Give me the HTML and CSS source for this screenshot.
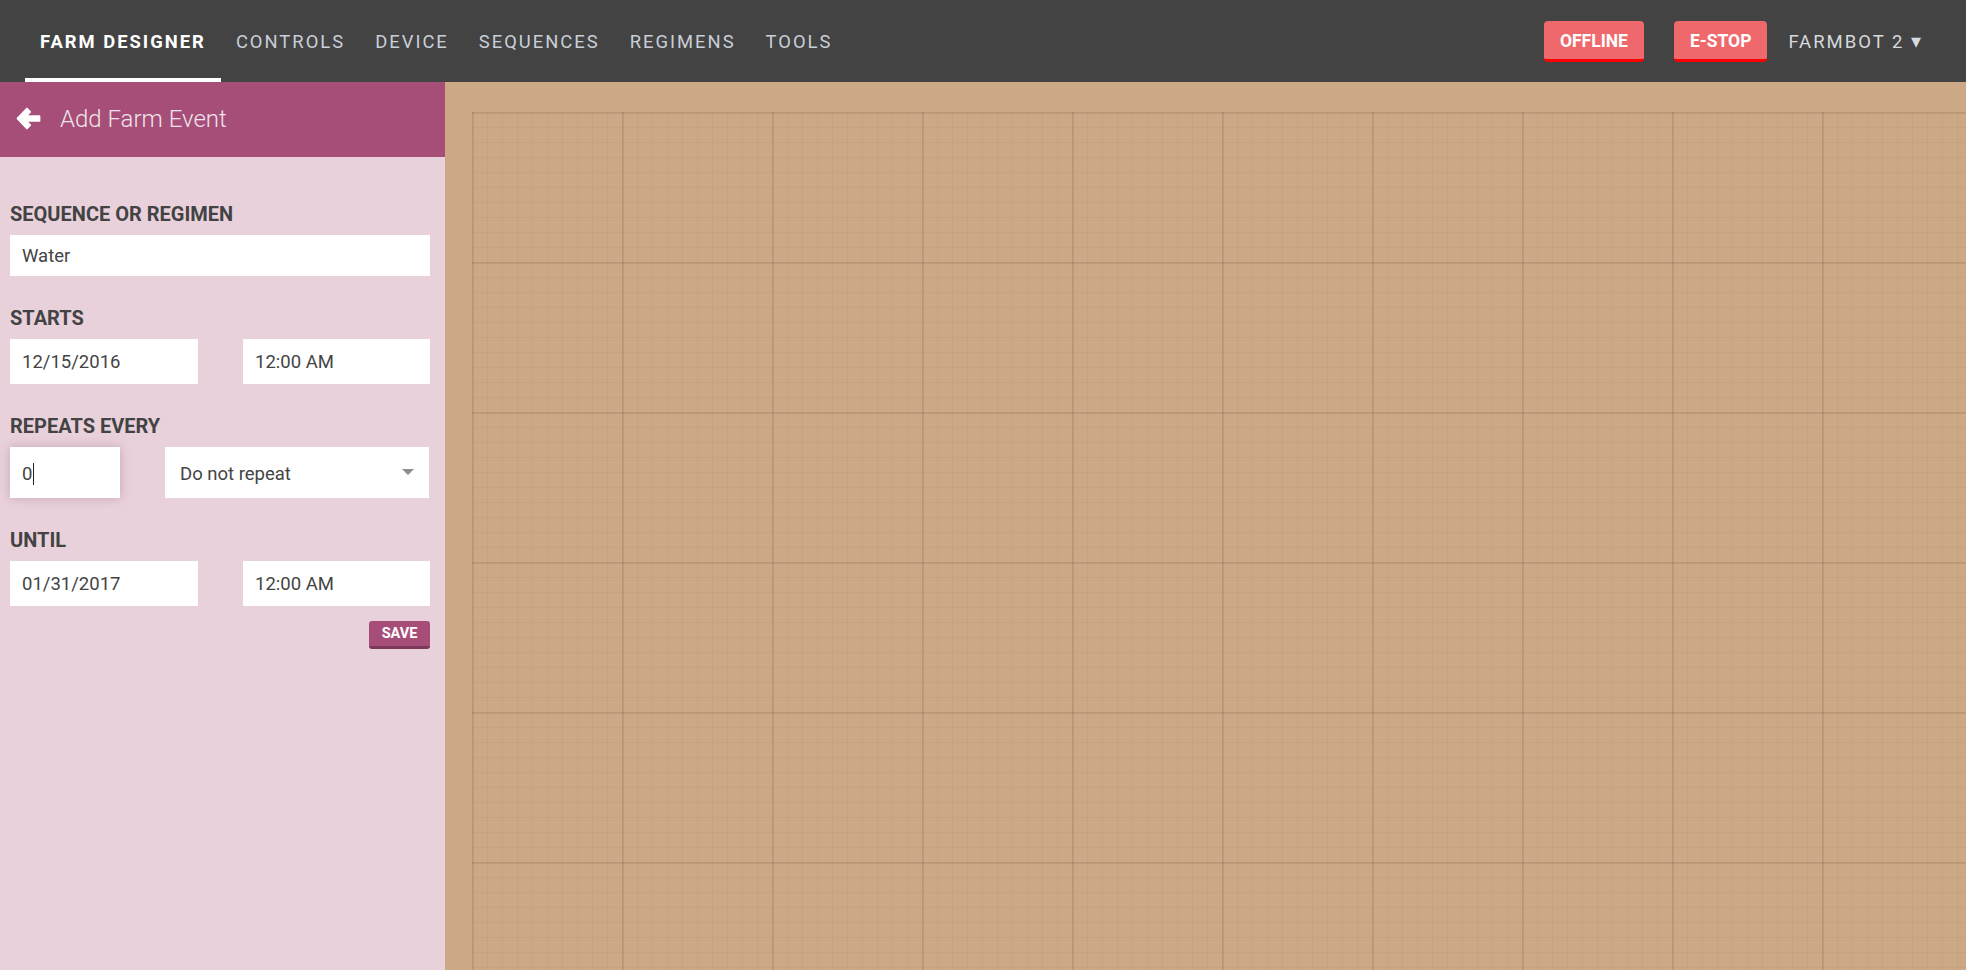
FILE: index.html
```html
<!DOCTYPE html>
<html lang="en">
<head>
<meta charset="utf-8">
<title>Farm Designer - Add Farm Event</title>
<link rel="stylesheet" href="styles.css">
</head>
<body>
<nav class="topbar">
  <div class="nav-links">
    <a class="nav-link active">FARM DESIGNER</a>
    <a class="nav-link">CONTROLS</a>
    <a class="nav-link">DEVICE</a>
    <a class="nav-link">SEQUENCES</a>
    <a class="nav-link">REGIMENS</a>
    <a class="nav-link">TOOLS</a>
  </div>
  <div class="nav-right">
    <button class="status-btn">OFFLINE</button>
    <button class="status-btn">E-STOP</button>
    <span class="bot-menu">FARMBOT 2 <span class="caret">▾</span></span>
  </div>
</nav>
<main class="layout">
  <aside class="panel">
    <header class="panel-header">
      <svg class="back-icon" viewBox="0 0 24 22" width="25" height="23" aria-hidden="true">
        <path d="M10.5 1.5 L1.5 11 L10.5 20.5 L13.6 17.4 L9.6 13.2 H22.5 V8.8 H9.6 L13.6 4.6 Z" fill="#ffffff" stroke="#ffffff" stroke-width="1.8" stroke-linejoin="round"/>
      </svg>
      <span class="panel-title">Add Farm Event</span>
    </header>
    <section class="form">
      <div class="field">
        <label class="field-label">SEQUENCE OR REGIMEN</label>
        <div class="box box-41">Water</div>
      </div>
      <div class="field">
        <label class="field-label">STARTS</label>
        <div class="pair">
          <div class="box box-45">12/15/2016</div>
          <div class="box box-45">12:00 AM</div>
        </div>
      </div>
      <div class="field">
        <label class="field-label">REPEATS EVERY</label>
        <div class="repeat-row">
          <div class="box box-51 focused">0<span class="text-caret"></span></div>
          <div class="box box-51 select">Do not repeat<span class="select-arrow"></span></div>
        </div>
      </div>
      <div class="field">
        <label class="field-label">UNTIL</label>
        <div class="pair">
          <div class="box box-45">01/31/2017</div>
          <div class="box box-45">12:00 AM</div>
        </div>
      </div>
      <div class="actions">
        <button class="save-btn">SAVE</button>
      </div>
    </section>
  </aside>
  <section class="canvas">
    <div class="grid"></div>
  </section>
</main>
</body>
</html>
```
FILE: styles.css
```css
* { box-sizing: border-box; }
html, body { margin: 0; height: 100%; }
body {
  font-family: Roboto, "Liberation Sans", sans-serif;
  background: #cca887;
  overflow: hidden;
  width: 1966px;
  height: 970px;
}

.topbar {
  height: 82px;
  background: #434343;
  display: flex;
  align-items: center;
  justify-content: space-between;
  padding: 0 45px 0 25px;
}
.nav-links { display: flex; height: 100%; }
.nav-link {
  display: flex;
  align-items: center;
  height: 82px;
  padding: 4px 15px 0 15px;
  border-bottom: 4px solid transparent;
  font-size: 18.4px;
  letter-spacing: 2px;
  color: #c9cfd8;
  cursor: pointer;
}
.nav-link.active {
  color: #ffffff;
  font-weight: 700;
  border-bottom-color: #ffffff;
}
.nav-right { display: flex; align-items: center; }
.status-btn {
  height: 41px;
  padding: 2px 16px 0;
  margin-right: 30px;
  border: none;
  border-bottom: 3px solid #ff0000;
  border-radius: 4px;
  background: #ef686b;
  color: #ffffff;
  font-family: Roboto, "Liberation Sans", sans-serif;
  font-weight: 700;
  font-size: 17.5px;
  line-height: 36px;
}
.status-btn + .status-btn { margin-right: 21px; }
.bot-menu {
  font-size: 18.5px;
  letter-spacing: 2px;
  color: #d6d9de;
}
.caret { font-size: 20px; letter-spacing: 0; }

.layout {
  display: flex;
  height: 888px;
}
.panel {
  width: 445px;
  flex: none;
  background: #e9d1dc;
}
.panel-header {
  height: 75px;
  background: #a64e78;
  display: flex;
  align-items: center;
  padding-left: 16px;
}
.back-icon { margin-right: 19px; margin-top: -2px; }
.panel-title {
  font-size: 24px;
  font-weight: 300;
  color: #efe4eb;
  margin-top: -2px;
}

.form { padding: 45px 15px 0 10px; }
.field + .field { margin-top: 30px; }
.field-label {
  display: block;
  font-size: 20px;
  font-weight: 700;
  line-height: 24px;
  color: #434343;
  margin-bottom: 9px;
}
.box {
  background: #ffffff;
  display: flex;
  align-items: center;
  padding-left: 12px;
  font-size: 18.5px;
  color: #444444;
  position: relative;
}
.box-41 { height: 41px; }
.box-45 { height: 45px; }
.box-51 { height: 51px; padding-top: 2px; }
.pair {
  display: grid;
  grid-template-columns: 188px 187px;
  column-gap: 45px;
}
.repeat-row {
  display: grid;
  grid-template-columns: 110px 264px;
  column-gap: 45px;
}
.focused {
  box-shadow: 0 0 10px rgba(90, 40, 60, 0.25);
}
.text-caret {
  display: inline-block;
  width: 1px;
  height: 22px;
  background: #222;
  margin-left: 1px;
}
.select { padding-left: 15px; }
.select-arrow {
  position: absolute;
  right: 15px;
  top: 22px;
  width: 0;
  height: 0;
  border-left: 6.5px solid transparent;
  border-right: 6.5px solid transparent;
  border-top: 6.5px solid #8c8c8c;
}
.actions {
  display: flex;
  justify-content: flex-end;
  margin-top: 15px;
}
.save-btn {
  width: 61px;
  height: 28px;
  border: none;
  border-bottom: 3px solid #7b3a5a;
  border-radius: 3px;
  background: #a64e78;
  color: #ffffff;
  font-family: Roboto, "Liberation Sans", sans-serif;
  font-weight: 700;
  font-size: 14.5px;
  padding: 0;
  line-height: 25px;
}

.canvas {
  flex: 1;
  padding: 30px 0 0 27px;
  background: #cca887;
}
.grid {
  width: 100%;
  height: 100%;
  background-image:
    linear-gradient(to right, rgba(90, 60, 30, 0.12) 2px, transparent 2px),
    linear-gradient(to bottom, rgba(90, 60, 30, 0.12) 2px, transparent 2px),
    linear-gradient(to right, rgba(90, 60, 30, 0.05) 1px, transparent 1px),
    linear-gradient(to bottom, rgba(90, 60, 30, 0.05) 1px, transparent 1px);
  background-size: 150px 150px, 150px 150px, 15px 15px, 15px 15px;
}
```
